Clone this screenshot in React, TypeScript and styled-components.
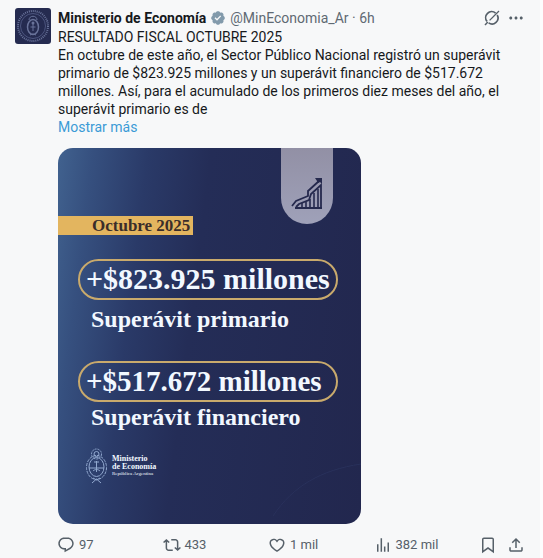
import React from "react";
import styled, { createGlobalStyle } from "styled-components";

const GlobalStyle = createGlobalStyle`
  * { box-sizing: border-box; }
  body {
    margin: 0;
    background: #f7f8f9;
    color: #16191c;
    font-family: Roboto, "Liberation Sans", sans-serif;
    font-size: 14px;
    line-height: 18px;
  }
`;

const Post = styled.article`
  display: flex;
  gap: 7px;
  min-height: 100vh;
  padding: 8px 15px 4px 15px;
  border-right: 3px solid #fdfdfe;
`;

const Avatar = styled.a`
  flex: none;
  width: 36px;
  height: 36px;
  border-radius: 3px;
  overflow: hidden;
  svg { display: block; }
`;

const Content = styled.div`
  flex: 1;
  min-width: 0;
`;

const Header = styled.header`
  display: flex;
  align-items: center;
  height: 20px;
`;

const Author = styled.a`
  color: #16191c;
  font-weight: 700;
  text-decoration: none;
  white-space: nowrap;
`;

const Meta = styled.a`
  color: #5f6a73;
  text-decoration: none;
  white-space: nowrap;
`;

const Badge = styled.span`
  display: flex;
  margin: 0 4px;
  color: #829aab;
`;

const HeaderTools = styled.div`
  display: flex;
  gap: 6px;
  margin-left: auto;
`;

const IconButton = styled.button`
  display: flex;
  align-items: center;
  gap: 4px;
  padding: 0;
  border: 0;
  background: none;
  color: #566069;
  font: inherit;
  font-size: 13px;
  cursor: pointer;
`;

const Body = styled.p`
  margin: 0;
  white-space: pre-line;
`;

const More = styled.a`
  display: block;
  color: #3b9bd6;
  text-decoration: none;
`;

const Card = styled.section`
  display: flex;
  flex-direction: column;
  align-items: flex-start;
  position: relative;
  width: 303px;
  max-width: 100%;
  margin-top: 12px;
  padding: 68px 0 40px;
  border-radius: 15px;
  overflow: hidden;
  background: linear-gradient(97deg, #41628f 0%, #36507f 10%, #2a3a68 26%, #242d57 44%, #22274e 100%);
  color: #f2f8ff;
  font-family: "Liberation Serif", serif;
  font-weight: 700;
`;

const Ribbon = styled.div`
  display: flex;
  justify-content: center;
  align-items: flex-end;
  position: absolute;
  top: 0;
  right: 28px;
  width: 52px;
  height: 76px;
  padding-bottom: 14px;
  border-radius: 0 0 26px 26px;
  background: linear-gradient(#9290a5, #9fa1b9);
`;

const Arc = styled.svg`
  position: absolute;
  right: 0;
  bottom: 0;
`;

const Period = styled.div`
  width: 135px;
  padding-left: 34px;
  background: #e3b55f;
  color: #3a2d2a;
  font-size: 17px;
  line-height: 19px;
  white-space: nowrap;
`;

const Amount = styled.div<{ $size: number }>`
  width: 260px;
  height: 41px;
  margin: 24px 0 0 20px;
  padding-left: 6px;
  border: 2px solid #c9aa6c;
  border-radius: 21px;
  font-size: ${(p) => p.$size}px;
  line-height: 36px;
  white-space: nowrap;
`;

const Caption = styled.div<{ $space: number }>`
  margin: ${(p) => p.$space}px 0 4px 33px;
  font-size: 24px;
  line-height: 28px;
  white-space: nowrap;
`;

const Seal = styled.div`
  display: flex;
  align-items: center;
  gap: 4px;
  margin: 13px 0 0 27px;
  font-size: 8px;
  line-height: 8px;
`;

const SealSmall = styled.div`
  font-size: 5px;
  font-weight: 400;
  line-height: 6px;
`;

const Actions = styled.footer`
  display: flex;
  margin: 12px 0 0 -1px;
`;

const Slot = styled.div`
  flex: 1;
`;

const Tail = styled.div`
  display: flex;
  gap: 10px;
`;

const Icon = ({ d, size = 18, box = 24 }: { d: string; size?: number; box?: number }) => (
  <svg width={size} height={size} viewBox={`0 0 ${box} ${box}`} fill="currentColor" aria-hidden="true">
    <path d={d} />
  </svg>
);

const paths = {
  verified:
    "M20.396 11c-.018-.646-.215-1.275-.57-1.816-.354-.54-.852-.972-1.438-1.246.223-.607.27-1.264.14-1.897-.131-.634-.437-1.218-.882-1.687-.47-.445-1.053-.75-1.687-.882-.633-.13-1.29-.083-1.897.14-.273-.587-.704-1.086-1.245-1.44S11.647 1.62 11 1.604c-.646.017-1.273.213-1.813.568s-.969.854-1.24 1.44c-.608-.223-1.267-.272-1.902-.14-.635.13-1.22.436-1.69.882-.445.47-.749 1.055-.878 1.688-.13.633-.08 1.29.144 1.896-.587.274-1.087.705-1.443 1.245-.356.54-.555 1.17-.574 1.817.02.647.218 1.276.574 1.817.356.54.856.972 1.443 1.245-.224.606-.274 1.263-.144 1.896.13.634.433 1.218.877 1.688.47.443 1.054.747 1.687.878.633.132 1.29.084 1.897-.136.274.586.705 1.084 1.246 1.439.54.354 1.17.551 1.816.569.647-.016 1.276-.213 1.817-.567s.972-.854 1.245-1.44c.604.239 1.266.296 1.903.164.636-.132 1.22-.447 1.68-.907.46-.46.776-1.044.908-1.681s.075-1.299-.165-1.903c.586-.274 1.084-.705 1.439-1.246.354-.54.551-1.17.569-1.816zM9.662 14.85l-3.429-3.428 1.293-1.302 2.072 2.072 4.4-4.794 1.347 1.246z",
  more: "M3 12c0-1.1.9-2 2-2s2 .9 2 2-.9 2-2 2-2-.9-2-2zm9 2c1.1 0 2-.9 2-2s-.9-2-2-2-2 .9-2 2 .9 2 2 2zm7 0c1.1 0 2-.9 2-2s-.9-2-2-2-2 .9-2 2 .9 2 2 2z",
  reply:
    "M1.751 10c0-4.42 3.584-8 8.005-8h4.366c4.49 0 8.129 3.64 8.129 8.13 0 2.96-1.607 5.68-4.196 7.11l-8.054 4.46v-3.69h-.067c-4.49.1-8.183-3.51-8.183-8.01zm8.005-6c-3.317 0-6.005 2.69-6.005 6 0 3.37 2.77 6.08 6.138 6.01l.351-.01h1.761v2.3l5.087-2.81c1.951-1.08 3.163-3.13 3.163-5.36 0-3.39-2.744-6.13-6.129-6.13H9.756z",
  repost:
    "M4.5 3.88l4.432 4.14-1.364 1.46L5.5 7.55V16c0 1.1.896 2 2 2H13v2H7.5c-2.209 0-4-1.79-4-4V7.55L1.432 9.48.068 8.02 4.5 3.88zM16.5 6H11V4h5.5c2.209 0 4 1.79 4 4v8.45l2.068-1.93 1.364 1.46-4.432 4.14-4.432-4.14 1.364-1.46 2.068 1.93V8c0-1.1-.896-2-2-2z",
  like: "M16.697 5.5c-1.222-.06-2.679.51-3.89 2.16l-.805 1.09-.806-1.09C9.984 6.01 8.526 5.44 7.304 5.5c-1.243.07-2.349.78-2.91 1.91-.552 1.12-.633 2.78.479 4.82 1.074 1.97 3.257 4.27 7.129 6.61 3.87-2.34 6.052-4.64 7.126-6.61 1.111-2.04 1.03-3.7.477-4.82-.561-1.13-1.666-1.84-2.908-1.91zm4.187 7.69c-1.351 2.48-4.001 5.12-8.379 7.67l-.503.3-.504-.3c-4.379-2.55-7.029-5.19-8.382-7.67-1.36-2.5-1.41-4.86-.514-6.67.887-1.79 2.647-2.91 4.601-3.01 1.651-.09 3.368.56 4.798 2.01 1.429-1.45 3.146-2.1 4.796-2.01 1.954.1 3.714 1.22 4.601 3.01.896 1.81.846 4.17-.514 6.67z",
  views: "M8.75 21V3h2v18h-2zM18 21V8.5h2V21h-2zM4 21l.004-10h2L6 21H4zm9.248 0v-7h2v7h-2z",
  bookmark:
    "M4 4.5C4 3.12 5.119 2 6.5 2h11C18.881 2 20 3.12 20 4.5v18.44l-8-5.71-8 5.71V4.5zM6.5 4c-.276 0-.5.22-.5.5v14.56l6-4.29 6 4.29V4.5c0-.28-.224-.5-.5-.5h-11z",
  share:
    "M12 2.59l5.7 5.7-1.41 1.42L13 6.41V16h-2V6.41l-3.3 3.3-1.41-1.42L12 2.59zM21 15l-.02 3.51c0 1.38-1.12 2.49-2.5 2.49H5.5C4.11 21 3 19.88 3 18.5V15h2v3.5c0 .28.22.5.5.5h12.98c.28 0 .5-.22.5-.5L19 15h2z",
};

const stats = [
  { label: "Responder", icon: paths.reply, value: "97" },
  { label: "Repostear", icon: paths.repost, value: "433" },
  { label: "Me gusta", icon: paths.like, value: "1 mil" },
  { label: "Visualizaciones", icon: paths.views, value: "382 mil" },
];

const AvatarArt = () => (
  <svg width="36" height="36" viewBox="0 0 36 36" fill="none">
    <rect width="36" height="36" fill="#252b50" />
    <circle cx="18" cy="18" r="15" stroke="#69739a" strokeWidth="2" strokeDasharray="1 1" />
    <circle cx="18" cy="18" r="12.5" stroke="#4c557f" strokeWidth="1" />
    <ellipse cx="18" cy="19" rx="5.5" ry="7.5" stroke="#69739a" strokeWidth="1.5" />
    <path d="M14 12c0-5 8-5 8 0M18 14v9M15.5 19h5M15 27l3-1 3 1" stroke="#69739a" />
    <circle cx="18" cy="15" r="1.5" fill="#69739a" />
  </svg>
);

const GrokIcon = () => (
  <svg width="18" height="18" viewBox="0 0 18 18" fill="none" stroke="currentColor" aria-hidden="true">
    <path d="M12.6 4.1A6 6 0 0 0 4 12.4M5.6 13.9A6 6 0 0 0 14.2 6" strokeWidth="1.7" />
    <path d="M16 2 6.6 11.4" strokeWidth="1.3" />
    <path d="M2 16 4.8 13" strokeWidth="1.5" />
  </svg>
);

const ChartIcon = () => (
  <svg width="34" height="34" viewBox="0 0 34 34" fill="none" stroke="#25294d" aria-hidden="true">
    <path d="M2 30 6 25l12-5v-5L29 5" strokeWidth="1.8" />
    <path d="M25 2h7v6l-2-2-2 1-1-2z" fill="#25294d" stroke="none" />
    <path d="M6 31 9 28l10-4 2-6 10-9v23" strokeWidth="1.8" />
    <path d="M12 27v5M16 26v6M20 23v9M24 17v15M28 13v19" strokeWidth="1.6" />
    <path d="M5 32h27" strokeWidth="2" />
  </svg>
);

const CrestIcon = () => (
  <svg width="23" height="36" viewBox="0 0 23 36" fill="none" stroke="#92a9d0" strokeWidth="1" aria-hidden="true">
    <circle cx="11.5" cy="6" r="5" strokeDasharray="2 1" />
    <circle cx="11.5" cy="6" r="2.5" />
    <ellipse cx="11.5" cy="19.5" rx="10" ry="12" strokeDasharray="3 1" />
    <ellipse cx="11.5" cy="19" rx="7.5" ry="9.5" />
    <path d="M4 20h15M11.5 13v11M8 23c2-2 5-2 7 0M9 14h5M7 35l4.5-4 4.5 4M8 30l3.5 2 3.5-2" />
  </svg>
);

export default function App() {
  return (
    <>
      <GlobalStyle />
      <Post>
        <Avatar href="#perfil" aria-label="Ministerio de Economía">
          <AvatarArt />
        </Avatar>
        <Content>
          <Header>
            <Author href="#perfil">Ministerio de Economía</Author>
            <Badge>
              <Icon d={paths.verified} size={16} box={22} />
            </Badge>
            <Meta href="#perfil">@MinEconomia_Ar · 6h</Meta>
            <HeaderTools>
              <IconButton aria-label="Grok">
                <GrokIcon />
              </IconButton>
              <IconButton aria-label="Más opciones">
                <Icon d={paths.more} />
              </IconButton>
            </HeaderTools>
          </Header>
          <Body>
            {"RESULTADO FISCAL OCTUBRE 2025\nEn octubre de este año, el Sector Público Nacional registró un superávit primario de $823.925 millones y un superávit financiero de $517.672 millones. Así, para el acumulado de los primeros diez meses del año, el superávit primario es de"}
          </Body>
          <More href="#post">Mostrar más</More>
          <Card>
            <Arc width="90" height="64" viewBox="0 0 90 64" fill="none" aria-hidden="true">
              <path d="M2 56C22 26 50 10 90 4" stroke="#29315b" />
            </Arc>
            <Ribbon>
              <ChartIcon />
            </Ribbon>
            <Period>Octubre 2025</Period>
            <Amount $size={30}>+$823.925 millones</Amount>
            <Caption $space={5}>Superávit primario</Caption>
            <Amount $size={29}>+$517.672 millones</Amount>
            <Caption $space={1}>Superávit financiero</Caption>
            <Seal>
              <CrestIcon />
              <div>
                <div>Ministerio</div>
                <div>de Economía</div>
                <SealSmall>República Argentina</SealSmall>
              </div>
            </Seal>
          </Card>
          <Actions>
            {stats.map((s) => (
              <Slot key={s.label}>
                <IconButton aria-label={`${s.value} ${s.label}`}>
                  <Icon d={s.icon} />
                  {s.value}
                </IconButton>
              </Slot>
            ))}
            <Tail>
              <IconButton aria-label="Guardar">
                <Icon d={paths.bookmark} />
              </IconButton>
              <IconButton aria-label="Compartir">
                <Icon d={paths.share} />
              </IconButton>
            </Tail>
          </Actions>
        </Content>
      </Post>
    </>
  );
}
